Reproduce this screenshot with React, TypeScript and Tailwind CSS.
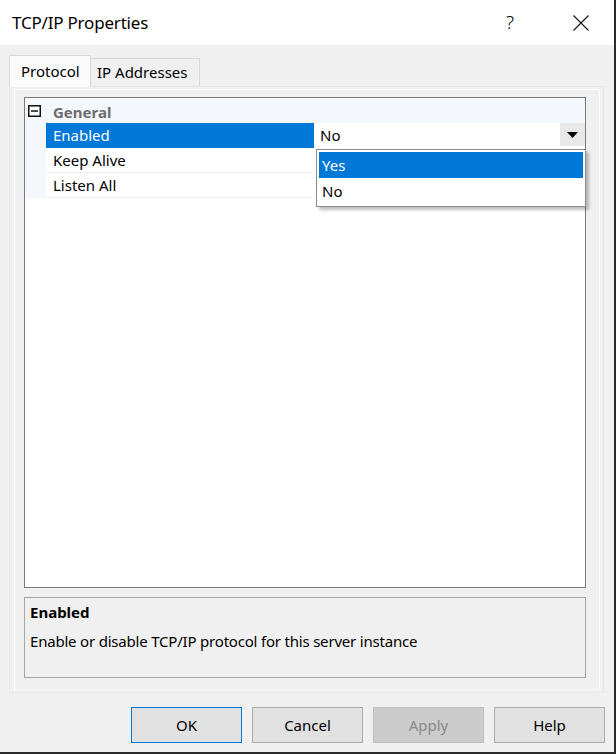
import React from 'react';

type Row = { label: string; value?: string; selected?: boolean };

const rows: Row[] = [
  { label: 'Enabled', value: 'No', selected: true },
  { label: 'Keep Alive' },
  { label: 'Listen All' },
];

function CollapseBox() {
  return (
    <svg width="13" height="12" viewBox="0 0 13 12" className="ml-[3px] shrink-0">
      <rect x="0.75" y="0.75" width="11.5" height="10.5" fill="white" stroke="#111" strokeWidth="1.5" />
      <line x1="3" y1="6" x2="10" y2="6" stroke="#111" strokeWidth="1.5" />
    </svg>
  );
}

function CloseIcon() {
  return (
    <svg width="16" height="16" viewBox="0 0 16 16" className="shrink-0">
      <path d="M0.5 0.5 L15.5 15.5 M15.5 0.5 L0.5 15.5" stroke="#111" strokeWidth="1.1" fill="none" />
    </svg>
  );
}

function GridRow({ row }: { row: Row }) {
  return (
    <div className="flex h-[25px]">
      <div className="w-[21px] bg-[#f4f7fb]" />
      <div
        className={
          row.selected
            ? 'w-[268px] pl-[7px] flex items-center bg-[#0078d7] text-white'
            : 'w-[268px] pl-[7px] flex items-center border-b border-[#eef0f3]'
        }
      >
        {row.label}
      </div>
      <div className="w-px bg-white" />
      <div
        className={
          row.selected
            ? 'flex-1 flex items-start'
            : 'flex-1 flex items-start border-b border-[#eef0f3]'
        }
      >
        {row.value && <span className="pl-[5px] h-[25px] flex items-center">{row.value}</span>}
        {row.selected && (
          <div className="ml-auto w-[25px] h-[23px] bg-[#e8e8e8] flex items-center justify-center">
            <svg width="11" height="6" viewBox="0 0 11 6">
              <path d="M0 0 H11 L5.5 6 Z" fill="#000" />
            </svg>
          </div>
        )}
      </div>
    </div>
  );
}

export default function App() {
  return (
    <div className="w-[616px] h-[754px] bg-[#2b2b2b] font-['Noto_Sans','Liberation_Sans',sans-serif] text-[15px] text-black">
      <div className="w-[614px] h-[752px] bg-[#f0f0f0] flex flex-col">
        {/* Title bar */}
        <div className="h-[45px] shrink-0 bg-white flex items-center">
          <span className="pl-3 text-[17px] leading-none tracking-[-0.2px]">TCP/IP Properties</span>
          <span className="ml-auto w-[14px] text-center text-[19px] font-light leading-none">?</span>
          <div className="ml-[56px] mr-[25px]">
            <CloseIcon />
          </div>
        </div>

        <div className="px-[9px] pt-[10px] flex flex-col">
          {/* Tabs */}
          <div className="flex items-end h-[31px]">
            <div className="relative z-10 -mb-px h-[32px] w-[82px] bg-[#fbfbfb] border border-b-0 border-[#d9d9d9] pl-[11px] pt-[4px] leading-[22px]">
              Protocol
            </div>
            <div className="h-[28px] w-[109px] bg-[#f0f0f0] border border-l-0 border-b-0 border-[#d9d9d9] pl-[6px] pt-[2px] leading-[22px]">
              IP Addresses
            </div>
          </div>

          {/* Tab page */}
          <div className="w-[595px] h-[607px] border border-[#e6e6e6] bg-[#f0f0f0] px-[4px] pt-[2px] pb-[2px]">
            <div className="h-full w-[586px] border border-white bg-[#f0f0f0] pl-[9px] pt-[7px]">
              {/* Property grid */}
              <div className="relative w-[562px] h-[491px] border border-[#7a7a7a] bg-white">
                <div className="h-[25px] bg-[#f4f7fb] flex items-center">
                  <CollapseBox />
                  <span className="ml-[12px] pt-[4px] font-bold text-[#6d6d6d]">General</span>
                </div>
                {rows.map((r) => (
                  <GridRow key={r.label} row={r} />
                ))}

                {/* Open dropdown */}
                <div className="absolute left-[291px] top-[51px] w-[270px] h-[58px] border border-[#8a8a8a] bg-white p-[2px] shadow-[3px_3px_3px_rgba(0,0,0,0.25)]">
                  <div className="h-[26px] pl-[3px] flex items-center bg-[#0078d7] text-white">Yes</div>
                  <div className="h-[26px] pl-[3px] flex items-center">No</div>
                </div>
              </div>

              {/* Description */}
              <div className="mt-[9px] w-[562px] h-[81px] border border-[#a5a5a5] px-[5px] pt-[3px]">
                <div className="font-bold leading-[22px]">Enabled</div>
                <div className="mt-[7px] leading-[22px] tracking-[-0.2px]">
                  Enable or disable TCP/IP protocol for this server instance
                </div>
              </div>
            </div>
          </div>
        </div>

        {/* Buttons */}
        <div className="flex justify-end gap-[10px] pr-[9px] mt-[14px]">
          <button className="w-[111px] h-[36px] border border-[#0078d7] bg-[#e1e1e1]">OK</button>
          <button className="w-[111px] h-[36px] border border-[#adadad] bg-[#e1e1e1]">Cancel</button>
          <button className="w-[111px] h-[36px] border border-[#bfbfbf] bg-[#cccccc] text-[#8a8a8a]">Apply</button>
          <button className="w-[111px] h-[36px] border border-[#adadad] bg-[#e1e1e1]">Help</button>
        </div>
      </div>
    </div>
  );
}
